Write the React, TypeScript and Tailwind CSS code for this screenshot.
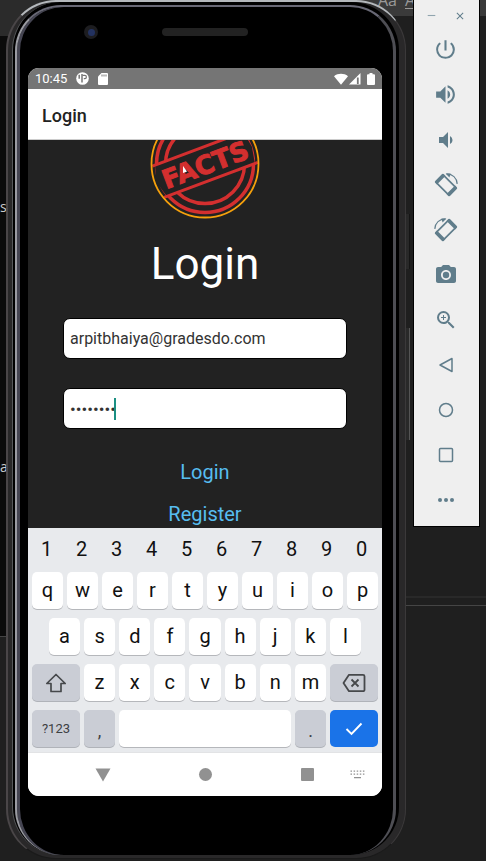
import type { ReactNode } from "react";
import {
  MdCameraAlt,
  MdClose,
  MdPowerSettingsNew,
  MdRemove,
  MdVolumeDown,
  MdVolumeUp,
  MdZoomIn,
} from "react-icons/md";

const digits = ["1", "2", "3", "4", "5", "6", "7", "8", "9", "0"];
const topRow = ["q", "w", "e", "r", "t", "y", "u", "i", "o", "p"];
const middleRow = ["a", "s", "d", "f", "g", "h", "j", "k", "l"];
const bottomRow = ["z", "x", "c", "v", "b", "n", "m"];

function RotateIcon({ flipped = false }: { flipped?: boolean }) {
  return (
    <svg width="26" height="26" viewBox="0 0 26 26" fill="none" aria-hidden="true">
      <g transform={flipped ? "translate(26 0) scale(-1 1)" : undefined}>
        <g transform="rotate(45 13 13)">
          <rect x="3.5" y="7.8" width="19" height="10.4" rx="1" stroke="currentColor" strokeWidth="1.7" />
          <path
            d="M3.6 7h2.6v12H3.6a1 1 0 0 1-1-1V8a1 1 0 0 1 1-1zM19.8 7h2.6a1 1 0 0 1 1 1v10a1 1 0 0 1-1 1h-2.6z"
            fill="currentColor"
          />
        </g>
        <path d="M13.5 1.9c6 .2 10.2 4 10.7 10" stroke="currentColor" strokeWidth="1.3" />
        <path d="M12.6 1.5h5l-1.2 4z" fill="currentColor" />
      </g>
    </svg>
  );
}

const tools: { name: string; icon: ReactNode }[] = [
  { name: "Power", icon: <MdPowerSettingsNew size={25} /> },
  { name: "Volume up", icon: <MdVolumeUp size={25} /> },
  { name: "Volume down", icon: <MdVolumeDown size={24} /> },
  { name: "Rotate left", icon: <RotateIcon /> },
  { name: "Rotate right", icon: <RotateIcon flipped /> },
  { name: "Take screenshot", icon: <MdCameraAlt size={24} /> },
  { name: "Zoom", icon: <MdZoomIn size={24} /> },
  {
    name: "Back",
    icon: (
      <svg width="16" height="16" viewBox="0 0 16 16" fill="none" aria-hidden="true">
        <path d="M14 1.5v13L2 8z" stroke="currentColor" strokeWidth="1.5" strokeLinejoin="round" />
      </svg>
    ),
  },
  {
    name: "Home",
    icon: (
      <svg width="16" height="16" viewBox="0 0 16 16" fill="none" aria-hidden="true">
        <circle cx="8" cy="8" r="6.5" stroke="currentColor" strokeWidth="1.5" />
      </svg>
    ),
  },
  {
    name: "Overview",
    icon: (
      <svg width="16" height="16" viewBox="0 0 16 16" fill="none" aria-hidden="true">
        <rect x="1.5" y="1.5" width="13" height="13" rx="1" stroke="currentColor" strokeWidth="1.5" />
      </svg>
    ),
  },
  {
    name: "More",
    icon: (
      <svg width="18" height="6" viewBox="0 0 18 6" fill="currentColor" aria-hidden="true">
        <circle cx="3" cy="3" r="2" />
        <circle cx="9" cy="3" r="2" />
        <circle cx="15" cy="3" r="2" />
      </svg>
    ),
  },
];

function Toolbar() {
  return (
    <aside className="flex w-[67px] shrink-0 flex-col self-start border-x border-b border-black bg-[#efefef] pr-0.5 text-[#607d8b]">
      <div className="flex h-[27px] items-center justify-center gap-3 pt-1">
        <button aria-label="Minimize" className="grid h-4 w-4 place-items-center text-[#90a4ae]">
          <MdRemove size={13} />
        </button>
        <button aria-label="Close" className="grid h-4 w-4 place-items-center">
          <MdClose size={12} />
        </button>
      </div>
      {tools.map((tool) => (
        <button key={tool.name} aria-label={tool.name} className="grid h-[45px] place-items-center">
          {tool.icon}
        </button>
      ))}
      <div className="h-1" />
    </aside>
  );
}

function StatusBar() {
  return (
    <div className="flex h-[21px] shrink-0 items-center bg-[#757575] px-[7px] text-white">
      <span className="text-[13px] leading-5">10:45</span>
      <svg className="ml-[9px]" width="13" height="13" viewBox="0 0 13 13" aria-hidden="true">
        <circle cx="6.5" cy="6.5" r="6.3" fill="#fff" />
        <path d="M3.2 2.8v4M6 2v8.5" fill="none" stroke="#757575" strokeWidth="1.5" />
        <path d="M6.5 3.4h2.3a1.6 1.6 0 0 1 0 3.200H7.800" fill="none" stroke="#757575" strokeWidth="1.2" />
      </svg>
      <svg className="ml-[9px]" width="10" height="12" viewBox="0 0 10 12" aria-hidden="true">
        <path d="M3.5 0H9a1 1 0 0 1 1 1v10a1 1 0 0 1-1 1H1a1 1 0 0 1-1-1V3.5z" fill="#fff" />
        <path d="M4 1.5v2M6 1.5v2M8 1.5v2" stroke="#757575" strokeWidth="1" />
      </svg>
      <div className="ml-auto flex items-center">
        <svg width="14" height="12" viewBox="0 0 14 12" fill="#fff" aria-hidden="true">
          <path d="M0 3.200C4 0 10 0 14 3.200L7 11.700z" />
        </svg>
        <svg className="ml-px" width="12" height="12" viewBox="0 0 12 12" aria-hidden="true">
          <path d="M0 11.5 11.5 0v11.5z" fill="#fff" />
          <path d="M8.800 4.5V11" stroke="#757575" strokeWidth="1.8" />
        </svg>
        <svg className="ml-1.5" width="8" height="12" viewBox="0 0 8 12" fill="#fff" aria-hidden="true">
          <path d="M2.5 0h3v1.2H7a1 1 0 0 1 1 1V11a1 1 0 0 1-1 1H1a1 1 0 0 1-1-1V2.200a1 1 0 0 1 1-1h1.5z" />
        </svg>
      </div>
    </div>
  );
}

function Stamp() {
  return (
    <svg className="mx-auto block shrink-0" width="110" height="79" viewBox="-55 -24 110 79" role="img" aria-label="Facts">
      <g fill="none" stroke="#d32f2f" strokeWidth="3.5">
        <circle r="48.5" />
        <circle r="39.5" />
      </g>
      <g transform="rotate(-20.5)">
        <path d="M-47-17H47L50 0 47 16.5H-47L-52 0z" fill="#222" />
        <path d="M-50-16.5H50M-50 17H50" stroke="#d32f2f" strokeWidth="3" />
        <text
          y="10"
          textAnchor="middle"
          fill="#d32f2f"
          stroke="#d32f2f"
          strokeWidth="1"
          className="font-['DejaVu_Sans',sans-serif] text-[26px] font-bold"
        >
          FACTS
        </text>
      </g>
      <circle r="53.5" fill="none" stroke="#f5a00c" strokeWidth="1.8" />
      <path d="M-22 2v7l4-1.500z" fill="#fff" />
    </svg>
  );
}

function LoginForm() {
  const field =
    "block h-[41px] w-full rounded-[7px] border border-black bg-white px-1.5 text-[#333] outline-none";
  return (
    <main className="flex h-[388px] flex-col overflow-hidden bg-[#222]">
      <Stamp />
      <h1 className="mt-[19px] text-center text-[44px] leading-[52px] text-white">Login</h1>
      <form className="mx-[35px] mt-7 flex flex-col gap-[29px]" onSubmit={(e) => e.preventDefault()}>
        <input
          aria-label="Email"
          type="email"
          defaultValue="arpitbhaiya@gradesdo.com"
          className={`${field} text-base`}
        />
        <div className="relative">
          <input aria-label="Password" type="password" defaultValue="password" className={`${field} text-[17px]`} />
          <span className="absolute top-2.5 left-[51px] h-[22px] w-0.5 bg-[#1b8f82]" />
        </div>
        <div className="flex flex-col items-center gap-3.5 text-xl leading-7 text-[#57bdf0]">
          <button type="submit">Login</button>
          <a href="#register">Register</a>
        </div>
      </form>
    </main>
  );
}

function Key({ label }: { label: string }) {
  return (
    <button className="h-[37px] w-[31px] grow rounded-[5px] bg-white pb-0.5 text-xl shadow-[0_1px_0_#b5b7bb]">
      {label}
    </button>
  );
}

function Keyboard() {
  const gray = "h-[37px] rounded-[5px] bg-[#cacdd5] text-[#3c4043] shadow-[0_1px_0_#b0b3b9]";
  return (
    <section aria-label="Keyboard" className="bg-[#e8eaed] px-1 pb-[5px] text-[#111]">
      <div className="flex h-11 gap-1">
        {digits.map((digit) => (
          <button key={digit} className="w-[31px] grow pr-0.5 pb-0.5 text-xl">
            {digit}
          </button>
        ))}
      </div>
      <div className="flex flex-col gap-[9px]">
        <div className="flex gap-1">
          {topRow.map((letter) => (
            <Key key={letter} label={letter} />
          ))}
        </div>
        <div className="flex gap-1 px-[17px]">
          {middleRow.map((letter) => (
            <Key key={letter} label={letter} />
          ))}
        </div>
        <div className="flex gap-1">
          <button aria-label="Shift" className={`${gray} grid w-12 place-items-center`}>
            <svg width="22" height="20" viewBox="0 0 22 20" fill="none" aria-hidden="true">
              <path d="M11 1.5 1.8 10.5H6v8h10v-8h4.2z" stroke="#46484b" strokeWidth="1.7" strokeLinejoin="round" />
            </svg>
          </button>
          {bottomRow.map((letter) => (
            <Key key={letter} label={letter} />
          ))}
          <button aria-label="Backspace" className={`${gray} grid w-12 place-items-center`}>
            <svg width="24" height="20" viewBox="0 0 24 20" fill="none" stroke="#46484b" aria-hidden="true">
              <path
                d="M7 1.8h14a1.5 1.5 0 0 1 1.5 1.5v13.4a1.5 1.5 0 0 1-1.5 1.5H7L1.5 10z"
                strokeWidth="1.8"
                strokeLinejoin="round"
              />
              <path d="m9.5 6.5 7 7m0-7-7 7" strokeWidth="1.8" />
            </svg>
          </button>
        </div>
        <div className="flex gap-1">
          <button className={`${gray} w-12 text-[13px]`}>?123</button>
          <button className={`${gray} w-[31px] pt-1 text-lg`}>,</button>
          <button aria-label="Space" className="h-[37px] flex-1 rounded-[5px] bg-white shadow-[0_1px_0_#b5b7bb]" />
          <button className={`${gray} w-[31px] pt-1 text-lg`}>.</button>
          <button aria-label="Done" className="grid h-[37px] w-12 place-items-center rounded-[5px] bg-[#1a73e8]">
            <svg width="18" height="14" viewBox="0 0 18 14" fill="none" aria-hidden="true">
              <path d="m1.5 7 5 5L16.5 1.5" stroke="#fff" strokeWidth="1.9" />
            </svg>
          </button>
        </div>
      </div>
    </section>
  );
}

function NavigationBar() {
  return (
    <nav className="grid h-11 grid-cols-[1fr_51px_51px_51px_51px_1fr] items-center border-t border-[#e2e3e5] bg-white text-[#919191]">
      <span />
      <button aria-label="Hide keyboard" className="-ml-[51px] grid place-items-center">
        <svg width="16" height="14" viewBox="0 0 16 14" fill="currentColor" aria-hidden="true">
          <path d="M.5.5h15L8 13.5z" />
        </svg>
      </button>
      <button aria-label="Home" className="col-span-2 grid place-items-center">
        <span className="h-[13px] w-[13px] rounded-full bg-[#919191]" />
      </button>
      <button aria-label="Recent apps" className="-mr-[51px] grid place-items-center">
        <span className="h-[13px] w-[13px] rounded-[1px] bg-[#919191]" />
      </button>
      <button aria-label="Switch keyboard" className="flex justify-end pr-[17px]">
        <svg width="15" height="9" viewBox="0 0 15 9" fill="none" stroke="currentColor" aria-hidden="true">
          <path d="M.5 1.2h14M.5 4.2h14" strokeWidth="1.3" strokeDasharray="1.5 1.6" />
          <path d="M4 7.7h7" strokeWidth="1.2" />
        </svg>
      </button>
    </nav>
  );
}

function Phone() {
  return (
    <div className="relative min-w-0 flex-1 self-start rounded-[50px] border-t-2 border-r border-b border-l-2 border-t-[#b4b8bc] border-r-[#3b393a] border-b-[#1a1a1a] border-l-[#4a4648] bg-[#292829] pr-1.5 pb-[3px] pl-1">
      <span className="absolute top-[212px] -right-[5px] h-[55px] w-1 border-r border-[#151515] bg-[#292929]" />
      <span className="absolute top-[326px] -right-[5px] h-[112px] w-1 border-r border-[#555] bg-[#292929]" />
      <div className="rounded-[48px] border-l border-[#56585a] bg-black pt-[3px] pr-[3px] pl-0.5">
        <div className="rounded-[46px] border-t-2 border-r-[3px] border-l-2 border-t-[#686875] border-r-[#4e4e54] border-l-[#9a9ba2] bg-black px-[11px] pb-[59px] shadow-[inset_3px_0_0_#454552]">
          <div className="mb-[11px] grid h-[50px] grid-cols-[1fr_86px_1fr] items-center">
            <span className="ml-14 grid h-3.5 w-3.5 place-items-center rounded-full bg-[#1d1d20]">
              <span className="h-[7px] w-[7px] rounded-full bg-[#233260]" />
            </span>
            <span className="h-2 rounded-full bg-[#222]" />
          </div>
          <div className="overflow-hidden rounded-[11px] bg-white">
            <StatusBar />
            <header className="flex h-[51px] items-center border-b border-[#ccc] px-3.5 pt-1 text-lg font-medium text-[#222]">
              Login
            </header>
            <LoginForm />
            <Keyboard />
            <NavigationBar />
          </div>
        </div>
      </div>
    </div>
  );
}

function EditorBackdrop() {
  return (
    <div className="absolute inset-0 font-['Open_Sans',sans-serif] text-[#ccc]">
      <div className="absolute top-0 left-0 h-9 w-1/2 bg-[#2b2b2b]" />
      <div className="absolute top-9 left-0 h-[601px] w-5 border-b border-[#444] bg-[#0b0b0b]" />
      <div className="absolute top-0 right-0 flex h-4 w-[140px] items-start gap-2 bg-[#3a3a3a] pl-8 text-base leading-none text-[#999]">
        <span className="-mt-2">Aa</span>
        <span className="-mt-2 border-b border-[#999]">Ab</span>
      </div>
      <div className="absolute top-[197px] left-0 text-sm leading-5">s</div>
      <div className="absolute top-[457px] left-0 text-sm leading-5">a</div>
      <div className="absolute top-[596px] right-0 h-2.5 w-[100px] border-t-2 border-b border-t-[#292929] border-b-[#454545]" />
    </div>
  );
}

export default function App() {
  return (
    <div className="relative flex min-h-screen gap-[7px] overflow-hidden bg-[#1f1f1f] px-1.5 font-['Roboto',sans-serif]">
      <EditorBackdrop />
      <Phone />
      <div className="relative flex">
        <Toolbar />
      </div>
    </div>
  );
}
